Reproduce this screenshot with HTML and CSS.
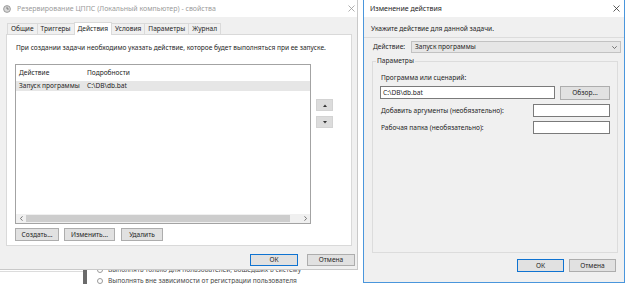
FILE: index.html
```html
<!DOCTYPE html>
<html lang="ru">
<head>
    <meta charset="UTF-8">
    <title>Изменение действия</title>
    <link rel="stylesheet" href="styles.css">
</head>
<body>
    <div class="desktop">
        <div class="left-col">
            <div class="window props">
                <div class="titlebar inactive">
                    <svg class="app-icon" width="8" height="8" viewBox="0 0 8 8">
                        <circle cx="4" cy="4" r="3.4" fill="#d8d8d8" stroke="#8a8a8a" stroke-width="0.8"/>
                        <path d="M4 1.8 V4 H5.8" fill="none" stroke="#6a6a6a" stroke-width="0.8"/>
                    </svg>
                    <span class="title">Резервирование ЦППС (Локальный компьютер) - свойства</span>
                    <svg class="close" width="7" height="7" viewBox="0 0 7 7">
                        <path d="M0.5 0.5 L6.5 6.5 M6.5 0.5 L0.5 6.5" stroke="#9a9a9a" stroke-width="0.8"/>
                    </svg>
                </div>

                <div class="tabs">
                    <span class="tab">Общие</span>
                    <span class="tab">Триггеры</span>
                    <span class="tab active">Действия</span>
                    <span class="tab">Условия</span>
                    <span class="tab">Параметры</span>
                    <span class="tab">Журнал</span>
                </div>

                <div class="tab-panel">
                    <p class="intro">При создании задачи необходимо указать действие, которое будет выполняться при ее запуске.</p>

                    <div class="list-row">
                        <div class="listview">
                            <div class="lv-head">
                                <span class="col1">Действие</span>
                                <span>Подробности</span>
                            </div>
                            <div class="lv-item selected">
                                <span class="col1">Запуск программы</span>
                                <span>C:\DB\db.bat</span>
                            </div>
                            <div class="lv-fill"></div>
                            <div class="hscroll">
                                <span class="sb-arrow">
                                    <svg width="3" height="5" viewBox="0 0 3 5"><path d="M2.5 0.3 L0.5 2.5 L2.5 4.7" fill="none" stroke="#555" stroke-width="0.8"/></svg>
                                </span>
                                <span class="sb-thumb"></span>
                                <span class="sb-track"></span>
                                <span class="sb-arrow">
                                    <svg width="3" height="5" viewBox="0 0 3 5"><path d="M0.5 0.3 L2.5 2.5 L0.5 4.7" fill="none" stroke="#555" stroke-width="0.8"/></svg>
                                </span>
                            </div>
                        </div>
                        <div class="move-btns">
                            <button class="move">
                                <svg width="4" height="3" viewBox="0 0 4 3"><path d="M0 3 L2 0.5 L4 3 Z" fill="#333"/></svg>
                            </button>
                            <button class="move">
                                <svg width="4" height="3" viewBox="0 0 4 3"><path d="M0 0 L2 2.5 L4 0 Z" fill="#333"/></svg>
                            </button>
                        </div>
                    </div>

                    <div class="btn-row">
                        <button class="btn w-create">Создать...</button>
                        <button class="btn w-edit">Изменить...</button>
                        <button class="btn w-delete">Удалить</button>
                    </div>
                </div>

                <div class="footer props-footer">
                    <button class="btn dlg default">ОК</button>
                    <button class="btn dlg">Отмена</button>
                </div>
            </div>

            <div class="behind">
                <div class="behind-left"></div>
                <div class="behind-bar"></div>
                <div class="behind-lines">
                    <div class="behind-line"><span class="radio"></span>Выполнять только для пользователей, вошедших в систему</div>
                    <div class="behind-line"><span class="radio"></span>Выполнять вне зависимости от регистрации пользователя</div>
                </div>
            </div>
        </div>

        <div class="gap-strip"></div>

        <div class="window edit">
            <div class="titlebar">
                <span class="title">Изменение действия</span>
                <svg class="close" width="7" height="7" viewBox="0 0 7 7">
                    <path d="M0.5 0.5 L6.5 6.5 M6.5 0.5 L0.5 6.5" stroke="#333" stroke-width="0.8"/>
                </svg>
            </div>

            <div class="edit-body">
                <p class="hint">Укажите действие для данной задачи.</p>

                <div class="action-row">
                    <span class="label">Действие:</span>
                    <div class="combo">
                        <span>Запуск программы</span>
                        <svg width="5" height="3" viewBox="0 0 5 3"><path d="M0.3 0.3 L2.5 2.5 L4.7 0.3" fill="none" stroke="#555" stroke-width="0.8"/></svg>
                    </div>
                </div>

                <fieldset class="group">
                    <legend>Параметры</legend>
                    <div class="field-label">Программа или сценарий:</div>
                    <div class="program-row">
                        <div class="textbox program">C:\DB\db.bat</div>
                        <button class="btn browse">Обзор...</button>
                    </div>
                    <div class="opt-row">
                        <span>Добавить аргументы (необязательно):</span>
                        <div class="textbox short"></div>
                    </div>
                    <div class="opt-row">
                        <span>Рабочая папка (необязательно):</span>
                        <div class="textbox short"></div>
                    </div>
                </fieldset>

                <div class="footer edit-footer">
                    <button class="btn dlg default">ОК</button>
                    <button class="btn dlg">Отмена</button>
                </div>
            </div>
        </div>
    </div>
</body>
</html>
```

FILE: styles.css
```css
body {
    margin: 0;
    background: #fff;
    font-family: "Noto Sans", "Liberation Sans", sans-serif;
    font-size: 6.6px;
    line-height: 10px;
    color: #1e1e1e;
}
p {
    margin: 0;
}
button {
    font-family: inherit;
    font-size: 6.6px;
    color: #1e1e1e;
    padding: 0;
}
.desktop {
    display: flex;
    width: 625px;
    height: 284px;
    overflow: hidden;
}

/* ---- left window: task properties ---- */
.left-col {
    width: 358px;
    display: flex;
    flex-direction: column;
}
.window {
    box-sizing: border-box;
    background: #f0f0f0;
    display: flex;
    flex-direction: column;
}
.props {
    height: 270px;
    flex: none;
    border-right: 1px solid #c9c9c9;
    border-bottom: 1px solid #c9c9c9;
}
.titlebar {
    height: 17px;
    flex: none;
    background: #fff;
    display: flex;
    align-items: center;
    padding: 0 4px 0 6px;
    font-size: 7px;
}
.titlebar.inactive {
    padding-left: 3px;
    padding-right: 2px;
    color: #9b9b9b;
}
.app-icon {
    margin-right: 6px;
}
.titlebar .title {
    flex: 1;
}
.tabs {
    display: flex;
    align-items: flex-end;
    height: 13px;
    margin-top: 4px;
    padding-left: 7px;
    position: relative;
    z-index: 1;
}
.tab {
    height: 11px;
    box-sizing: border-box;
    padding: 0 3px;
    border: 1px solid #dadada;
    border-bottom: none;
    margin-right: -1px;
    line-height: 10px;
    background: #f0f0f0;
}
.tab.active {
    height: 13px;
    padding: 1px 3px 0;
    background: #fff;
    margin-bottom: -1px;
}
.tab-panel {
    margin: 0 5px 0 6px;
    border: 1px solid #d9d9d9;
    background: #fff;
    padding: 8px 8px 4px;
}
.intro {
    margin: 0 0 11px 1px;
    white-space: nowrap;
}
.list-row {
    display: flex;
}
.listview {
    width: 296px;
    height: 160px;
    box-sizing: border-box;
    border: 1px solid #a3a3a3;
    display: flex;
    flex-direction: column;
}
.lv-head,
.lv-item {
    display: flex;
    padding-left: 3px;
}
.lv-head {
    height: 15px;
    align-items: center;
}
.lv-item {
    height: 10px;
    margin-top: 1px;
    align-items: center;
}
.lv-item.selected {
    background: #e6e6e6;
}
.col1 {
    width: 68px;
}
.lv-fill {
    flex: 1;
}
.hscroll {
    height: 9px;
    display: flex;
    background: #f0f0f0;
}
.sb-arrow {
    width: 10px;
    display: flex;
    align-items: center;
    justify-content: center;
}
.sb-thumb {
    width: 264px;
    margin: 1px 0;
    background: #cdcdcd;
}
.sb-track {
    flex: 1;
}
.move-btns {
    display: flex;
    flex-direction: column;
    gap: 5px;
    margin-left: 5px;
    padding-top: 35px;
}
.move {
    width: 17px;
    height: 12px;
    border: 1px solid #d3d3d3;
    background: #dcdcdc;
    display: flex;
    align-items: center;
    justify-content: center;
}
.btn-row {
    display: flex;
    gap: 5px;
    margin-top: 4px;
}
.btn {
    height: 13px;
    box-sizing: border-box;
    border: 1px solid #adadad;
    background: #e1e1e1;
    line-height: 10px;
}
.w-create { width: 44px; }
.w-edit { width: 51px; margin-right: 1px; }
.w-delete { width: 42px; }
.footer {
    display: flex;
    justify-content: flex-end;
}
.props-footer {
    gap: 9px;
    padding: 8px 2px 0 0;
}
.dlg {
    width: 48px;
    height: 12px;
}
.default {
    border-color: #0f73d1;
}

/* ---- what shows of the window behind ---- */
.behind {
    flex: 1;
    display: flex;
    overflow: hidden;
    color: #4a4a4a;
}
.behind-left {
    width: 83px;
    border-top: 1px solid #dcdcdc;
    margin-top: 1px;
}
.behind-bar {
    width: 4px;
    background: #6b6b6b;
}
.behind-lines {
    margin-top: -6px;
    padding-left: 10px;
}
.behind-line {
    display: flex;
    align-items: center;
    height: 11px;
    white-space: nowrap;
}
.radio {
    width: 4px;
    height: 4px;
    border: 1px solid #9a9a9a;
    border-radius: 50%;
    margin-right: 5px;
}
.gap-strip {
    width: 5px;
    background: #fff;
}

/* ---- right window: edit action ---- */
.edit {
    width: 262px;
    height: 283px;
    border: 1px solid #4a96dc;
    border-top: none;
}
.edit-body {
    flex: 1;
    display: flex;
    flex-direction: column;
}
.hint {
    margin-top: 7px;
    padding: 0 0 3px 7px;
}
.action-row {
    display: flex;
    align-items: center;
    height: 12px;
    padding: 3px 3px 0 9px;
    border-top: 1px solid #dcdcdc;
}
.combo {
    margin-left: auto;
    width: 210px;
    height: 12px;
    box-sizing: border-box;
    border: 1px solid #c2c2c2;
    background: #e6e6e6;
    display: flex;
    align-items: center;
    justify-content: space-between;
    padding: 0 3px 0 3px;
}
.group {
    flex: 1;
    margin: 3px 6px 0 8px;
    padding: 0 7px 0 7px;
    border: 1px solid #dcdcdc;
    min-width: 0;
}
.group legend {
    margin-left: -4px;
    padding: 0 1px;
    line-height: 10px;
}
.field-label {
    margin: 7px 0 0 1px;
}
.program-row {
    display: flex;
    justify-content: space-between;
    margin-top: 3px;
}
.textbox {
    height: 13px;
    box-sizing: border-box;
    border: 1px solid #7a7a7a;
    background: #fff;
    line-height: 11px;
    padding-left: 2px;
}
.program {
    width: 175px;
}
.browse {
    width: 50px;
    height: 14px;
}
.opt-row {
    display: flex;
    justify-content: space-between;
    align-items: center;
    margin-top: 4px;
    padding-left: 1px;
}
.short {
    width: 77px;
}
.edit-footer {
    gap: 5px;
    padding: 6px 8px 10px 0;
}
.edit-footer .dlg {
    width: 47px;
    height: 13px;
}
```
